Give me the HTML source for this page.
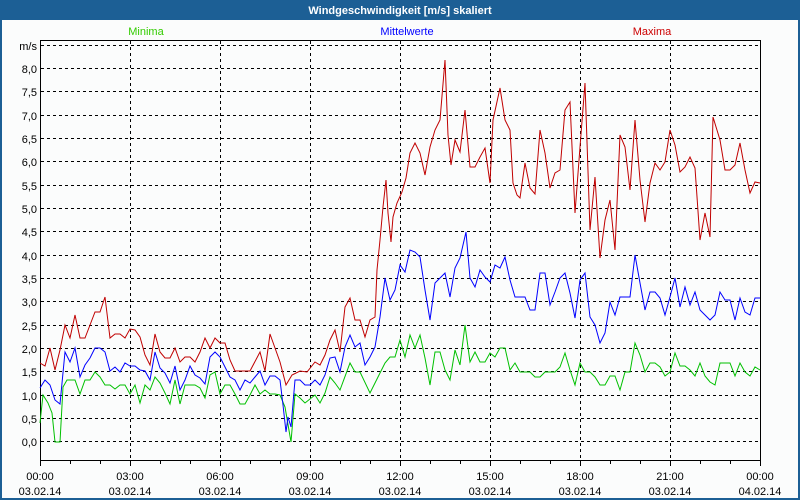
<!DOCTYPE html>
<html><head><meta charset="utf-8"><style>
html,body{margin:0;padding:0;width:800px;height:500px;overflow:hidden;background:#fbfcfc}
svg{display:block}
text{font-family:"Liberation Sans","DejaVu Sans",sans-serif;font-size:11px}
</style></head><body>
<svg width="800" height="500" viewBox="0 0 800 500" xmlns="http://www.w3.org/2000/svg">
<rect x="0" y="0" width="800" height="500" fill="#fbfcfc"/>
<rect x="0" y="0" width="800" height="20" fill="#1c5f95"/>
<rect x="0" y="0" width="2" height="500" fill="#1c5f95"/>
<rect x="798" y="0" width="2" height="500" fill="#1c5f95"/>
<rect x="0" y="498" width="800" height="2" fill="#1c5f95"/>
<text x="400" y="14" fill="#fff" font-weight="bold" text-anchor="middle">Windgeschwindigkeit [m/s] skaliert</text>
<text x="146" y="35" fill="#33cc00" text-anchor="middle">Minima</text>
<text x="407" y="35" fill="#0000ff" text-anchor="middle">Mittelwerte</text>
<text x="652" y="35" fill="#cc0000" text-anchor="middle">Maxima</text>
<g stroke="#000" stroke-width="1" stroke-dasharray="3,3" fill="none">
<path d="M41 45.5H760M41 68.5H760M41 91.5H760M41 115.5H760M41 138.5H760M41 161.5H760M41 185.5H760M41 208.5H760M41 231.5H760M41 255.5H760M41 278.5H760M41 301.5H760M41 325.5H760M41 348.5H760M41 371.5H760M41 395.5H760M41 418.5H760M41 441.5H760"/>
<path d="M130.5 41V460M220.5 41V460M310.5 41V460M400.5 41V460M490.5 41V460M580.5 41V460M670.5 41V460"/>
</g>
<g stroke="#000" stroke-width="1" fill="none">
<path d="M40.5 40.5H760.5V460.5H40.5Z"/>
<path d="M40.5 460V466M70.5 460V464M100.5 460V464M130.5 460V466M160.5 460V464M190.5 460V464M220.5 460V466M250.5 460V464M280.5 460V464M310.5 460V466M340.5 460V464M370.5 460V464M400.5 460V466M430.5 460V464M460.5 460V464M490.5 460V466M520.5 460V464M550.5 460V464M580.5 460V466M610.5 460V464M640.5 460V464M670.5 460V466M700.5 460V464M730.5 460V464M760.5 460V466"/>
</g>
<g fill="#000" text-anchor="end">
<text x="37" y="50">m/s</text><text x="37" y="73">8,0</text><text x="37" y="96">7,5</text><text x="37" y="120">7,0</text><text x="37" y="143">6,5</text><text x="37" y="166">6,0</text><text x="37" y="190">5,5</text><text x="37" y="213">5,0</text><text x="37" y="236">4,5</text><text x="37" y="260">4,0</text><text x="37" y="283">3,5</text><text x="37" y="306">3,0</text><text x="37" y="330">2,5</text><text x="37" y="353">2,0</text><text x="37" y="376">1,5</text><text x="37" y="400">1,0</text><text x="37" y="423">0,5</text><text x="37" y="446">0,0</text>
</g>
<g fill="#000" text-anchor="middle">
<text x="40" y="480">00:00</text><text x="130" y="480">03:00</text><text x="220" y="480">06:00</text><text x="310" y="480">09:00</text><text x="400" y="480">12:00</text><text x="490" y="480">15:00</text><text x="580" y="480">18:00</text><text x="670" y="480">21:00</text><text x="760" y="480">00:00</text>
<text x="40" y="495">03.02.14</text><text x="130" y="495">03.02.14</text><text x="220" y="495">03.02.14</text><text x="310" y="495">03.02.14</text><text x="400" y="495">03.02.14</text><text x="490" y="495">03.02.14</text><text x="580" y="495">03.02.14</text><text x="670" y="495">03.02.14</text><text x="760" y="495">04.02.14</text>
</g>
<g fill="none" stroke-width="1">
<polyline stroke="#00c000" points="40,423 43,395 48,403 52,413 55,442 60,442 63,387 67,380 75,380 80,394 85,380 90,380 95,372 100,377 105,385 110,385 115,389 120,385 125,385 130,394 135,385 140,403 145,385 150,390 155,377 160,383 165,393 170,404 175,380 180,404 185,385 190,385 195,385 200,388 205,398 210,375 215,372 220,394 225,385 230,385 235,394 240,404 245,404 250,395 255,385 260,394 265,390 270,394 275,394 280,395 285,407 291,442 295,394 300,398 305,403 315,395 320,403 325,393 330,377 335,383 340,390 350,363 355,372 360,372 370,393 375,383 380,373 385,363 390,357 395,357 400,340 405,357 410,335 415,348 420,335 425,358 430,385 435,352 440,352 445,370 450,380 455,350 460,365 465,325 470,362 475,352 480,362 485,362 490,353 495,357 500,348 505,348 510,370 515,363 520,372 530,372 535,377 540,377 545,372 555,372 560,367 565,353 570,370 575,385 580,363 585,372 590,372 595,377 600,385 605,385 610,376 615,376 620,390 625,372 630,372 635,343 640,355 645,372 650,363 655,363 660,367 665,376 670,372 675,353 680,366 685,366 690,370 695,376 700,363 705,376 710,382 715,385 720,363 725,363 730,363 735,376 740,363 745,372 750,376 755,367 760,370"/>
<polyline stroke="#0000ff" points="40,388 45,380 50,385 55,400 60,404 65,352 70,362 75,348 80,377 85,365 90,358 95,348 100,348 105,352 110,371 115,367 120,372 125,363 130,366 135,366 140,370 145,371 150,380 155,352 160,368 165,373 170,383 175,366 180,390 185,380 190,366 195,375 200,378 205,384 210,357 215,352 220,357 225,367 230,377 235,380 240,390 245,380 250,383 255,377 260,371 265,385 270,376 275,376 280,380 283,405 286,432 288,417 291,427 295,380 300,380 305,385 310,385 315,380 320,385 325,375 330,358 335,357 340,372 345,347 350,335 355,347 360,343 365,365 370,357 375,347 380,317 385,278 390,300 395,290 400,265 405,272 410,250 415,252 420,257 425,290 430,320 435,283 445,273 450,297 455,268 460,258 466,232 470,278 475,287 480,270 485,277 490,282 495,265 500,268 505,257 510,280 515,297 525,297 530,310 535,310 540,273 545,273 550,305 555,292 560,278 565,273 570,293 575,318 580,280 585,273 590,317 595,325 600,343 605,333 610,302 615,315 620,297 630,297 635,255 640,283 645,310 650,292 655,292 660,298 665,315 670,297 675,278 680,307 685,287 690,305 695,292 700,310 705,315 710,320 715,315 720,292 725,300 730,300 735,320 740,298 745,312 750,315 755,298 760,298"/>
<polyline stroke="#c00000" points="40,363 45,366 50,348 55,370 60,350 65,325 70,338 75,315 80,338 85,338 90,325 95,312 100,312 105,297 110,338 115,334 120,334 125,338 130,329 135,330 140,337 145,355 150,365 155,334 160,352 165,358 170,358 175,348 180,362 185,357 190,357 195,362 200,352 205,338 210,348 215,338 220,343 225,343 230,360 235,371 250,371 260,352 265,371 270,334 275,348 280,362 286,385 292,375 300,371 307,372 315,362 320,365 325,355 330,340 335,330 340,352 345,307 350,298 355,320 360,320 365,337 370,320 375,317 377,270 380,240 383,207 386,180 388,213 391,242 393,217 397,203 402,192 406,178 410,153 415,143 420,153 425,175 430,147 435,130 440,120 445,60 448,135 451,165 455,140 460,152 465,110 470,167 475,167 480,157 485,148 490,183 493,120 500,88 505,120 510,130 513,183 517,195 520,198 525,163 530,188 535,194 540,130 545,153 550,188 555,173 560,170 565,110 570,102 575,213 580,147 585,83 590,230 595,177 600,258 605,220 610,200 615,250 620,135 625,147 630,190 635,120 640,180 645,222 650,183 655,163 660,170 665,162 670,130 675,145 680,172 685,167 690,157 695,168 700,240 705,213 710,237 713,117 720,140 725,170 730,170 735,165 740,143 745,170 750,193 755,182 760,183"/>
</g>
</svg>
</body></html>
